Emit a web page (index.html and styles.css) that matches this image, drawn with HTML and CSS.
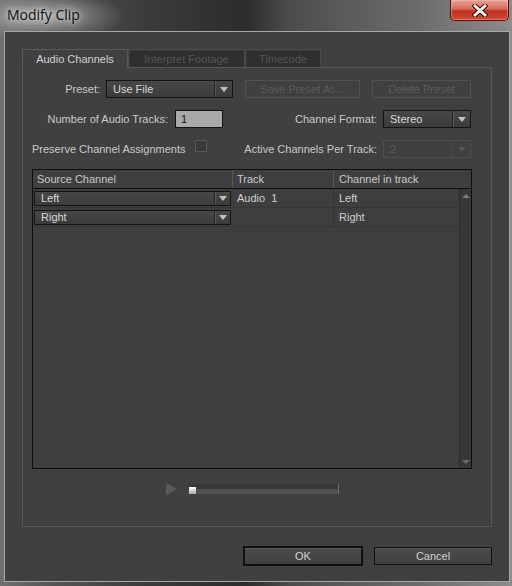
FILE: index.html
```html
<!DOCTYPE html>
<html>
<head>
<meta charset="utf-8">
<title>Modify Clip</title>
<link rel="stylesheet" href="styles.css">
</head>
<body>
<div class="window">
  <div class="titlebar">
    <span class="title">Modify Clip</span>
    <div class="close">
      <svg width="16" height="13" viewBox="0 0 16 13">
        <path d="M3 2 L13 11 M13 2 L3 11" stroke="#3a0d08" stroke-width="4.8" stroke-linecap="square" fill="none"/>
        <path d="M3 2 L13 11 M13 2 L3 11" stroke="#ffffff" stroke-width="2.8" stroke-linecap="square" fill="none"/>
      </svg>
    </div>
  </div>
  <div class="client">
    <div class="tabs">
      <div class="tab active">Audio Channels</div>
      <div class="tab off t-interp">Interpret Footage</div>
      <div class="tab off t-time">Timecode</div>
    </div>
    <div class="panel">
      <div class="row">
        <span class="lbl l-preset">Preset:</span>
        <div class="dd d-preset"><span class="val">Use File</span><span class="arr"></span></div>
        <div class="btn dis b-save">Save Preset As...</div>
        <div class="btn dis b-del">Delete Preset</div>
      </div>
      <div class="row">
        <span class="lbl l-num">Number of Audio Tracks:</span>
        <div class="inp">1</div>
        <span class="lbl l-fmt">Channel Format:</span>
        <div class="dd d-fmt"><span class="val">Stereo</span><span class="arr"></span></div>
      </div>
      <div class="row">
        <span class="lbl l-pres">Preserve Channel Assignments</span>
        <span class="chk"></span>
        <span class="lbl l-act">Active Channels Per Track:</span>
        <div class="dd d-fmt dd-dis"><span class="val">2</span><span class="arr"></span></div>
      </div>
      <div class="table">
        <div class="thead">
          <div class="th c1">Source Channel</div>
          <div class="th c2">Track</div>
          <div class="th c3">Channel in track</div>
        </div>
        <div class="tbody">
          <div class="rows">
            <div class="tr">
              <div class="td c1"><div class="dd d-row"><span class="val">Left</span><span class="arr"></span></div></div>
              <div class="td c2">Audio  1</div>
              <div class="td c3">Left</div>
            </div>
            <div class="tr">
              <div class="td c1"><div class="dd d-row"><span class="val">Right</span><span class="arr"></span></div></div>
              <div class="td c2"></div>
              <div class="td c3">Right</div>
            </div>
          </div>
          <div class="scroll">
            <span class="sa up"></span>
            <span class="sa down"></span>
          </div>
        </div>
      </div>
      <div class="player">
        <span class="play"></span>
        <div class="slider"><span class="thumb"></span></div>
      </div>
    </div>
    <div class="footer">
      <div class="btn ok">OK</div>
      <div class="btn cancel">Cancel</div>
    </div>
  </div>
</div>
</body>
</html>
```
FILE: styles.css
```css
* { box-sizing: border-box; }
html, body { margin: 0; padding: 0; }
body {
  width: 512px;
  height: 586px;
  overflow: hidden;
  font-family: "Liberation Sans", Arial, sans-serif;
  font-size: 11px;
  color: #c9c9c9;
  background: #555;
}

.window {
  width: 512px;
  height: 586px;
  display: flex;
  flex-direction: column;
  background:
    radial-gradient(ellipse 80px 24px at 45px 16px, rgba(225,225,225,0.55), rgba(225,225,225,0) 100%),
    linear-gradient(90deg, #707070 0%, #555 10%, #3c3c3c 28%, #2c2c2c 48%, #4b4b4b 56%, #5b5b5b 68%, #6c6c6c 82%, #8c8c8c 100%);
}

.titlebar {
  height: 31px;
  flex: none;
  display: flex;
  justify-content: space-between;
  align-items: flex-start;
}
.title {
  font-family: "Open Sans", "Noto Sans", sans-serif;
  font-size: 14px;
  line-height: 19px;
  margin: 5px 0 0 7px;
  color: #111;
  text-shadow: 0 0 6px rgba(255,255,255,0.9), 0 0 12px rgba(255,255,255,0.6);
}
.close {
  width: 59px;
  height: 21px;
  margin-right: 3px;
  border: 1px solid #4a1410;
  border-top: none;
  border-radius: 0 0 5px 5px;
  background: linear-gradient(#e8a398 0%, #d8705f 42%, #c0301f 56%, #d04a33 100%);
  box-shadow: inset 0 0 0 1px rgba(255,190,180,0.45);
  display: flex;
  align-items: center;
  justify-content: center;
}

.client {
  flex: 1;
  margin: 0 2px 4px 4px;
  border: 1px solid #a8a8a8;
  background: #404040;
  padding: 17px 17px 0 17px;
  display: flex;
  flex-direction: column;
}

.tabs {
  display: flex;
  align-items: flex-end;
  height: 18px;
  flex: none;
}
.tab {
  height: 18px;
  border: 1px solid #4a4a4a;
  border-bottom: none;
  display: flex;
  align-items: center;
  justify-content: center;
}
.tab.active {
  width: 106px;
  height: 19px;
  margin-bottom: -1px;
  background: #404040;
  border-color: #5a5a5a;
  color: #d0d0d0;
  position: relative;
  z-index: 1;
}
.tab.off {
  background: #2f2f2f;
  color: #555;
  box-shadow: inset 1px 1px 0 #3a3a3a;
}
.t-interp { width: 117px; }
.t-time { width: 76px; }

.panel {
  height: 460px;
  flex: none;
  border: 1px solid #575757;
  display: flex;
  flex-direction: column;
}

.row {
  display: flex;
  align-items: center;
  height: 18px;
  margin-top: 12px;
  flex: none;
}
.lbl { flex: none; white-space: nowrap; }
.l-preset { width: 77px; margin-right: 6px; text-align: right; }
.l-num { width: 145px; margin-right: 7px; text-align: right; }
.l-fmt { width: 154px; margin-right: 6px; text-align: right; }
.l-pres { width: 163px; margin-left: 9px; }
.l-act { width: 170px; margin-right: 6px; text-align: right; }

.dd {
  display: flex;
  align-items: center;
  height: 18px;
  flex: none;
  border: 1px solid #141414;
  background: linear-gradient(#484848, #3b3b3b);
  color: #d8d8d8;
}
.dd .val { flex: 1; padding-left: 6px; white-space: nowrap; }
.dd .arr {
  width: 18px;
  height: 100%;
  border-left: 1px solid #262626;
  box-shadow: inset 1px 0 0 #565656;
  display: flex;
  align-items: center;
  justify-content: center;
}
.dd .arr::after {
  content: "";
  border-left: 4px solid transparent;
  border-right: 4px solid transparent;
  border-top: 5px solid #c2c2c2;
}
.d-preset { width: 127px; }
.d-fmt { width: 88px; }
.dd-dis {
  border-color: #4e4e4e;
  background: #404040;
  color: #5a5a5a;
}
.dd-dis .arr { border-left-color: #4a4a4a; box-shadow: none; }
.dd-dis .arr::after { border-top-color: #555; }

.d-row { width: 197px; height: 15px; }
.d-row .arr { width: 16px; }

.btn {
  display: flex;
  align-items: center;
  justify-content: center;
  flex: none;
  white-space: nowrap;
}
.btn.dis {
  height: 18px;
  border: 1px solid #525252;
  color: #5c5c5c;
}
.b-save { width: 115px; margin-left: 12px; }
.b-del { width: 99px; margin-left: 12px; }

.inp {
  width: 48px;
  height: 18px;
  flex: none;
  border: 1px solid #111;
  background: #a9a9a9;
  color: #111;
  padding-left: 5px;
  display: flex;
  align-items: center;
}

.chk {
  width: 12px;
  height: 12px;
  flex: none;
  align-self: flex-start;
  border: 1px solid #585858;
  background: #3a3a3a;
}

.table {
  margin: 11px 0 0 9px;
  width: 440px;
  height: 300px;
  flex: none;
  border: 1px solid #0e0e0e;
  background: #3e3e3e;
  display: flex;
  flex-direction: column;
}
.thead {
  display: flex;
  height: 19px;
  flex: none;
  border-bottom: 1px solid #0e0e0e;
  background: #3f3f3f;
}
.th {
  display: flex;
  align-items: center;
  padding-left: 4px;
  color: #c9c9c9;
}
.th.c1 { width: 200px; border-right: 1px solid #585858; }
.th.c2 { width: 101px; border-right: 1px solid #585858; }
.th.c3 { flex: 1; padding-left: 5px; }

.tbody { flex: 1; display: flex; }
.rows { width: 426px; display: flex; flex-direction: column; }
.tr {
  display: flex;
  height: 19px;
  flex: none;
  border-bottom: 1px solid #363636;
}
.td {
  display: flex;
  align-items: center;
  white-space: pre;
  color: #d0d0d0;
}
.td.c1 { width: 200px; padding-left: 1px; }
.td.c2 { width: 101px; padding-left: 4px; border-right: 1px solid #353535; }
.td.c3 { flex: 1; padding-left: 5px; }

.scroll {
  width: 12px;
  flex: none;
  background: #373737;
  border-left: 1px solid #2a2a2a;
  display: flex;
  flex-direction: column;
  justify-content: space-between;
  align-items: center;
  padding: 5px 0 4px;
}
.sa { width: 0; height: 0; border-left: 4px solid transparent; border-right: 4px solid transparent; }
.sa.up { border-bottom: 4px solid #7c7c7c; }
.sa.down { border-top: 4px solid #6c6c6c; }

.player {
  display: flex;
  align-items: center;
  height: 12px;
  margin: 14px 0 0 143px;
  flex: none;
}
.play {
  width: 0;
  height: 0;
  border-left: 11px solid #5b5b5b;
  border-top: 6px solid transparent;
  border-bottom: 6px solid transparent;
}
.slider {
  position: relative;
  width: 151px;
  height: 10px;
  margin-left: 11px;
  background: linear-gradient(#393939 0, #393939 55%, #505050 55%, #505050 100%);
  border-right: 1px solid #6e6e6e;
}
.thumb {
  position: absolute;
  left: 1px;
  top: 3px;
  width: 7px;
  height: 7px;
  background: linear-gradient(#ffffff, #a8a8a8);
}

.footer {
  display: flex;
  justify-content: flex-end;
  align-items: center;
  height: 20px;
  margin-top: 19px;
  flex: none;
}
.btn.ok, .btn.cancel {
  background: linear-gradient(#4c4c4c, #404040);
  box-shadow: inset 0 1px 0 #5a5a5a;
  color: #d2d2d2;
}
.btn.ok { width: 120px; height: 20px; border: 2px solid #101010; }
.btn.cancel { width: 118px; height: 18px; border: 1px solid #101010; margin-left: 11px; }
```
